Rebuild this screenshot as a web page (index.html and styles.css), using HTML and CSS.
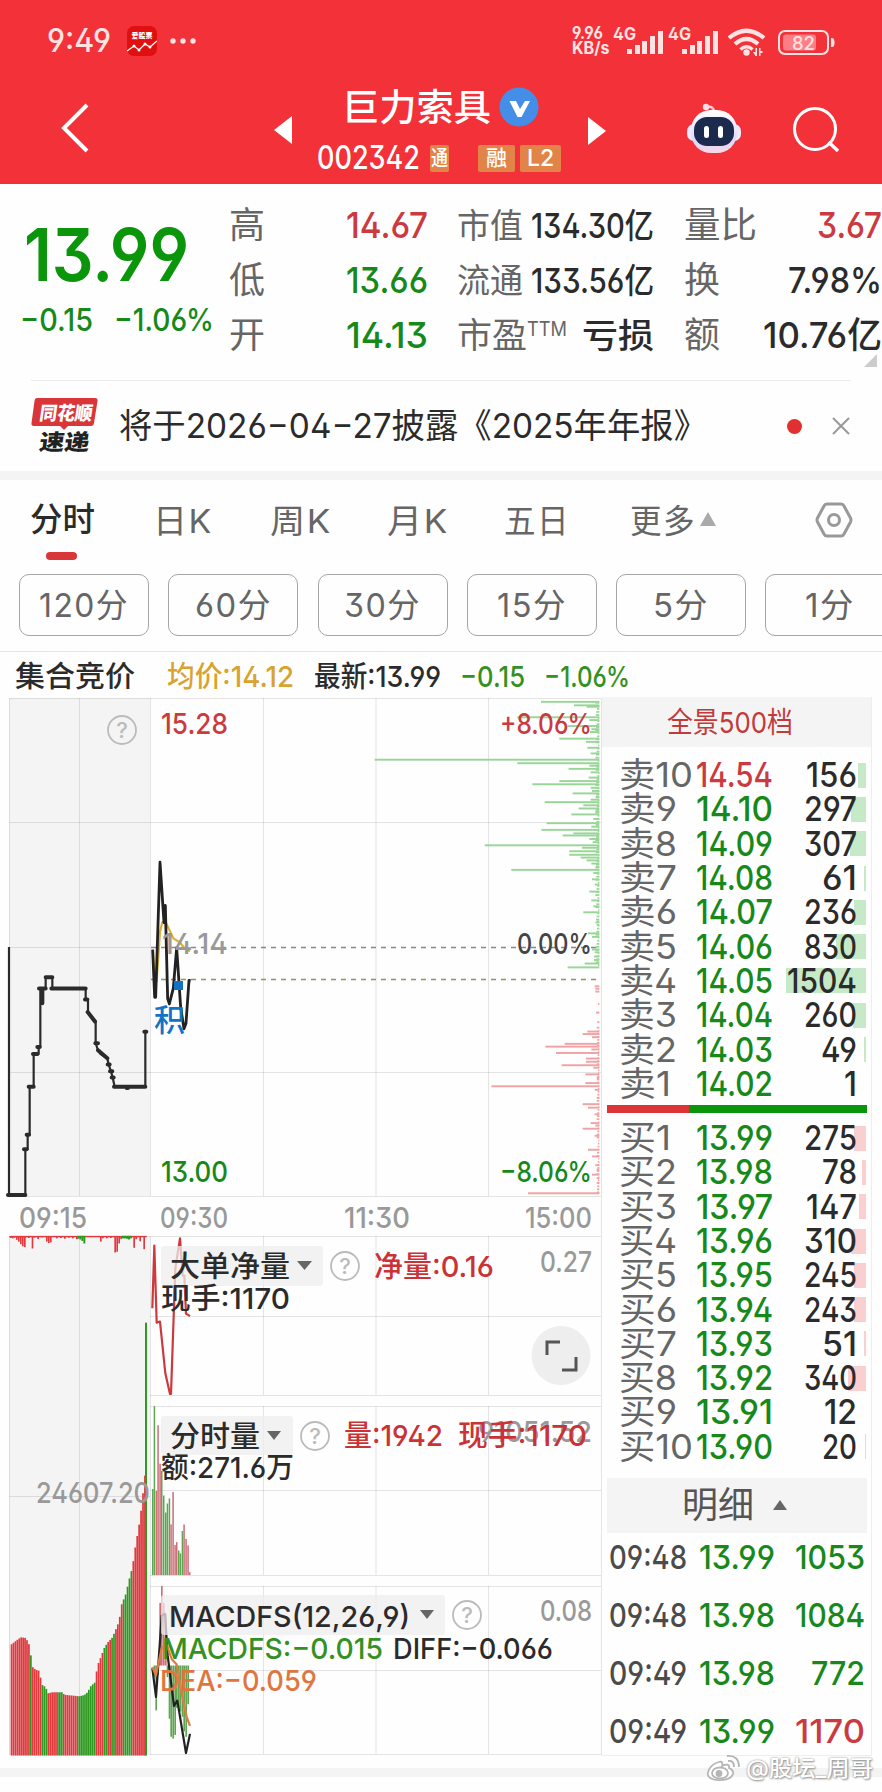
FILE: index.html
```html
<!DOCTYPE html>
<html lang="zh-CN">
<head>
    <meta charset="UTF-8">
    <meta name="viewport" content="width=device-width, initial-scale=1.0">
    <title>巨力索具 002342</title>
    <link rel="stylesheet" href="styles.css">
</head>
<body>

<header class="header">
    <div class="status-bar">
        <span class="clock" data-w="64">9:49</span>
        <svg class="app-icon" width="30" height="30" viewBox="0 0 30 30">
            <rect width="30" height="30" rx="7" fill="#e00f10"/>
            <text x="4.500" y="12" font-size="7" font-weight="900" fill="#fff" textLength="21">爱股票</text>
            <path d="M0 25 L7 20 L12 24 L18 18 L23 21 L30 15" fill="none" stroke="#fff" stroke-width="1.3"/>
            <circle cx="7" cy="20" r="1.500" fill="#fff"/><circle cx="12" cy="24" r="1.500" fill="#fff"/><circle cx="18" cy="18" r="1.500" fill="#fff"/><circle cx="23" cy="21" r="1.500" fill="#fff"/>
        </svg>
        <svg class="dots" width="28" height="6" fill="#ffe3e3"><circle cx="3" cy="3" r="2.700"/><circle cx="13" cy="3" r="2.700"/><circle cx="23" cy="3" r="2.700"/></svg>
        <div class="speed"><span data-w="36">9.96</span><span data-w="38">KB/s</span></div>
        <svg class="signals" width="264" height="32" viewBox="0 0 264 32" fill="#ffe3e3">
            <text x="1" y="15" font-size="17" font-weight="700" textLength="23" lengthAdjust="spacingAndGlyphs">4G</text>
            <path d="M15 24h5v5h-5zM23 20h5v9h-5zM30 16h5v13h-5zM38 11h5v18h-5zM46 6h5v23h-5z"/>
            <text x="56" y="15" font-size="17" font-weight="700" textLength="23" lengthAdjust="spacingAndGlyphs">4G</text>
            <path d="M70 24h5v5h-5zM78 20h5v9h-5zM85 16h5v13h-5zM93 11h5v18h-5zM101 6h5v23h-5z"/>
            <g fill="none" stroke="#ffe3e3" stroke-width="4.200">
                <path d="M117 13 Q134.500 -1.500 152 13"/>
                <path d="M123 19 Q134.500 9 146 19"/>
                <path d="M128.500 24.500 Q134.500 19 140.500 24.500" stroke-width="3.500"/>
            </g>
            <circle cx="134.500" cy="27.500" r="3.200"/>
            <path d="M141 27h2.500v-4h1.500v8h-1.500zM147 23h1.500v3h2v2h-2v3h-1.500z"/>
            <rect x="167" y="6" width="49" height="23" rx="6" fill="none" stroke="#ffe3e3" stroke-width="2"/>
            <rect x="171" y="9.500" width="33" height="16" rx="3" fill="#fb7f84"/>
            <path d="M219 13h1q2.500 0 2.500 4.500t-2.500 4.500h-1z"/>
            <text x="180" y="24.500" font-size="18" font-weight="500" textLength="23" lengthAdjust="spacingAndGlyphs">82</text>
        </svg>
    </div>
    <div class="nav">
        <svg class="back" width="30" height="52" viewBox="0 0 30 52"><path d="M27 3 L4 26 L27 49" fill="none" stroke="#fff" stroke-width="4"/></svg>
        <svg class="prev" width="18" height="28"><path d="M18 0 V28 L0 14z" fill="#fff"/></svg>
        <div class="stock">
            <div class="stock-name">
                <span data-w="149">巨力索具</span>
                <svg class="verified" width="40" height="40" viewBox="0 0 40 40"><circle cx="20" cy="20" r="19.500" fill="#448ee8"/><path d="M10.500 14 H17 L21 22 L26 14 H31 L22.500 30 H18.500z" fill="#fff"/></svg>
            </div>
            <div class="stock-code">
                <span class="code" data-w="103">002342</span>
                <i class="tag tag-clip"><b data-w="17">通</b></i>
                <i class="tag tag-rong">融</i>
                <i class="tag tag-l2">L2</i>
            </div>
        </div>
        <svg class="next" width="18" height="28"><path d="M0 0 V28 L18 14z" fill="#fff"/></svg>
        <svg class="robot" width="54" height="52" viewBox="0 0 54 52">
            <defs><linearGradient id="shell" x1="0" y1="0" x2="0" y2="1"><stop offset="0" stop-color="#fff"/><stop offset=".7" stop-color="#ded9fb"/><stop offset="1" stop-color="#f7d6e8"/></linearGradient></defs>
            <path d="M20 4 Q27 3 27 9" fill="none" stroke="#ffc9d2" stroke-width="2.500"/><circle cx="19" cy="4" r="3.200" fill="#ffe0e4"/>
            <rect x="0" y="21" width="54" height="17" rx="7" fill="#eceafc"/>
            <rect x="4" y="7" width="46" height="43" rx="20" fill="url(#shell)"/>
            <rect x="7" y="14" width="40" height="29" rx="13" fill="#1b2a4d"/>
            <rect x="17" y="23" width="5" height="12" rx="2.500" fill="#fff"/><rect x="31" y="23" width="5" height="12" rx="2.500" fill="#fff"/>
        </svg>
        <svg class="search" width="48" height="48" viewBox="0 0 48 48" fill="none" stroke="#fff" stroke-width="3"><circle cx="23" cy="23" r="20.500"/><path d="M36.500 36 L46 45" stroke-width="3.500"/></svg>
    </div>
</header>

<section class="quote">
    <div class="price-box">
        <div class="price"><span data-w="165">13.99</span></div>
        <div class="change"><span data-w="73">−0.15</span><span data-w="100">−1.06%</span></div>
    </div>
    <div class="facts facts-a">
        <div><em>高</em><span class="red" data-w="82">14.67</span></div>
        <div><em>低</em><span class="green" data-w="82">13.66</span></div>
        <div><em>开</em><span class="green" data-w="82">14.13</span></div>
    </div>
    <div class="facts facts-b">
        <div><em data-w="66">市值</em><span data-w="123">134.30亿</span></div>
        <div><em data-w="66">流通</em><span data-w="123">133.56亿</span></div>
        <div><em class="pe">市盈<sup data-w="40">TTM</sup></em><span data-w="72">亏损</span></div>
    </div>
    <div class="facts facts-c">
        <div><em data-w="73">量比</em><span class="red" data-w="65">3.67</span></div>
        <div><em>换</em><span data-w="94">7.98%</span></div>
        <div><em>额</em><span data-w="119">10.76亿</span></div>
        <svg class="corner" width="13" height="13"><path d="M13 0 V13 H0z" fill="#ccc"/></svg>
    </div>
</section>

<section class="notice">
    <svg class="notice-logo" width="68" height="58" viewBox="0 0 68 58">
        <path d="M6 1 H64 Q67 1 66.500 4 L63 26 Q62.500 29 60 29 H37 L33 33 L29 29 H3 Q0 29 .5 26 L3.500 4 Q4 1 6 1z" fill="#d9363a"/>
        <g font-weight="900">
            <text transform="skewX(-8)" x="11" y="23" font-size="19" fill="#fff" textLength="53" lengthAdjust="spacingAndGlyphs">同花顺</text>
            <text transform="skewX(-8)" x="15" y="53" font-size="22" fill="#222" textLength="50" lengthAdjust="spacingAndGlyphs">速递</text>
        </g>
    </svg>
    <span class="notice-text" data-w="588">将于2026−04−27披露《2025年年报》</span>
    <i class="red-dot"></i>
    <svg class="close" width="18" height="18" stroke="#999" stroke-width="2"><path d="M1 1 L17 17 M17 1 L1 17"/></svg>
</section>

<nav class="tabs">
    <span class="tab active"><b data-w="65">分时</b></span>
    <span class="tab"><b data-w="60">日K</b></span>
    <span class="tab"><b data-w="62">周K</b></span>
    <span class="tab"><b data-w="62">月K</b></span>
    <span class="tab"><b data-w="66">五日</b></span>
    <span class="tab"><b data-w="66">更多</b><svg class="more" width="16" height="14"><path d="M8 0 L16 14 H0z" fill="#aaa"/></svg></span>
    <svg class="gear" width="38" height="36" viewBox="0 0 38 36" fill="none" stroke="#999" stroke-width="3"><path d="M12 2 H26 Q28 2 29 4 L35.500 16 Q36.500 18 35.500 20 L29 32 Q28 34 26 34 H12 Q10 34 9 32 L2.500 20 Q1.500 18 2.500 16 L9 4 Q10 2 12 2z"/><circle cx="19" cy="18" r="5.500"/></svg>
</nav>

<div class="periods">
    <button><b data-w="90">120分</b></button>
    <button><b data-w="77">60分</b></button>
    <button><b data-w="77">30分</b></button>
    <button><b data-w="70">15分</b></button>
    <button><b data-w="56">5分</b></button>
    <button><b data-w="50">1分</b></button>
</div>

<div class="summary">
    <span class="auction" data-w="120">集合竞价</span>
    <span class="avg" data-w="127">均价:14.12</span>
    <span class="last" data-w="127">最新:13.99</span>
    <span class="down" data-w="65">−0.15</span>
    <span class="down" data-w="86">−1.06%</span>
</div>

<main class="main">
    <svg class="chart" width="602" height="1070" viewBox="0 690 602 1070">
        <g class="panels">
            <rect x="9" y="698" width="141" height="498"/>
            <rect x="9" y="1236" width="141" height="519"/>
        </g>
        <path class="grid" d="M9.500 698.500H601 M9.500 822.500H601 M9.500 947.500H150 M9.500 1072.500H601 M9.500 1196.500H601
            M9.500 698V1196 M79.500 698V1196 M150.500 698V1196 M263.500 698V1196 M376 698V1196 M488.500 698V1196 M601.500 698V1755
            M9.500 1236.500H601 M150 1316.500H601 M150 1395.500H601 M150 1406.500H601 M150 1490.500H601 M150 1575.500H601 M150 1586.500H601 M150 1670.500H601 M150 1754.500H601
            M9.500 1236V1755 M79.500 1236V1755 M150.500 1236V1755 M9.500 1496.500H150
            M263.500 1236V1395 M376 1236V1395 M488.500 1236V1395 M263.500 1406V1575 M376 1406V1575 M488.500 1406V1575 M263.500 1586V1754 M376 1586V1754 M488.500 1586V1754"/>

        <g id="depth" transform="translate(300 690) scale(.33333 .35077)"></g>
        <path d="M151 947.500H601" stroke="#888" stroke-width="1.300" stroke-dasharray="5 5"/>
        <path d="M151 979.500H601" stroke="#99905a" stroke-width="1.300" stroke-dasharray="5 5"/>

        <g class="line" transform="translate(0 690) scale(.33333 .35077)">
            <path stroke="#2b2b2b" d="M27 733 V1440 H76 V1309 H83 V1268 H89 V1131 H101 V1038 H116 V1018 H121 V851 H127 V893 V851 H137 V819 H157 V851 H257 V882 H264 V918 L287 945 V1007 L294 1027 L302 1038 L322 1050 L326 1068 L333 1087 L338 1105 L344 1131 H436 V974"/>
            <path class="thick" d="M24 1440 H76 M72 1309 H80 M80 1268 H87 M86 1131 H101 M99 1038 H112 M112 1018 H119 M117 851 H137 M127 851 V893 M137 819 H157 M154 851 H257 M255 882 H262 M263 918 L285 945 M286 1007 H294 M294 1027 L322 1050 M323 1068 H329 M330 1087 H337 M335 1105 H341 M342 1131 H436 M380 1135 H384 M433 974 H439"/>
            <path stroke="#e0af3a" d="M458 740 L463 800 L470 830 L480 690 L487 662 L497 662 L505 678 L520 708 L540 720 L555 738 L570 745"/>
            <path class="price-line" d="M458 740 L464 876 L467 876 L480 491 L492 663 L496 614 L503 880 L508 895 L520 850 L530 735 L542 905 L552 966 L558 950 L567 828 H572"/>
        </g>
        <rect x="174" y="981" width="9" height="9" fill="#1272c4"/>
        <text x="154" y="1031" font-size="31" font-weight="500" fill="#1272c4">积</text>

        <g class="axis">
            <text x="161" y="734" textLength="67" fill="#cb3a3e">15.28</text>
            <text x="500" y="734" textLength="92" fill="#cb3a3e">+8.06%</text>
            <text x="162" y="954" textLength="66" fill="#999">14.14</text>
            <text x="517" y="954" textLength="75" fill="#444">0.00%</text>
            <text x="161" y="1182" textLength="67" fill="#17891a">13.00</text>
            <text x="500" y="1182" textLength="92" fill="#17891a">−8.06%</text>
            <g fill="#999">
                <text x="19" y="1228" textLength="68">09:15</text>
                <text x="160" y="1228" textLength="68">09:30</text>
                <text x="344" y="1228" textLength="66">11:30</text>
                <text x="525" y="1228" textLength="67">15:00</text>
            </g>
        </g>
        <g class="help"><circle cx="122" cy="730" r="14"/><text x="122" y="738">?</text></g>

        <g id="sub" transform="translate(0 1225) scale(.33333 .36166)"></g>
        <g class="line" transform="translate(0 1225) scale(.33333 .36166)">
            <path stroke="#cc3a3e" d="M457 230 L463 57 L470 270 L480 267 L496 410 L510 467 H513 L526 120 L540 37 L548 140 L553 140 L558 245 L570 252"/>
            <path stroke="#222" d="M457 1225 L468 1305 L480 1150 L485 1080 L495 1075 L503 1190 L522 1330 L532 1315 L558 1460 L570 1407"/>
            <path stroke="#e07b44" d="M457 1222 L468 1245 L485 1170 L500 1160 L515 1200 L530 1215 L548 1310 L560 1360 L570 1385"/>
        </g>

        <g class="pick">
            <rect x="161" y="1246" width="162" height="40" rx="3"/><path d="M297 1261h15l-7.500 9z"/>
            <rect x="161" y="1416" width="132" height="39" rx="3"/><path d="M267 1431h14l-7 9z"/>
            <rect x="161" y="1595" width="284" height="40" rx="3"/><path d="M420 1610h14l-7 9z"/>
        </g>
        <g class="labels">
            <text x="170" y="1277" textLength="120">大单净量</text>
            <text x="161" y="1309" textLength="129">现手:1170</text>
            <text x="374" y="1277" textLength="120" fill="#cb3236">净量:0.16</text>
            <text x="170" y="1447" textLength="90">分时量</text>
            <text x="161" y="1478" textLength="133">额:271.6万</text>
            <text class="dim" x="478" y="1442" textLength="114">91051.52</text>
            <text x="344" y="1446" textLength="99" fill="#cb3236">量:1942</text>
            <text x="458" y="1446" textLength="129" fill="#cb3236">现手:1170</text>
            <text x="169" y="1627" textLength="241">MACDFS(12,26,9)</text>
            <text x="162" y="1659" textLength="221" fill="#35911f">MACDFS:−0.015</text>
            <text x="393" y="1659" textLength="160">DIFF:−0.066</text>
            <text x="160" y="1691" textLength="157" fill="#e0763f">DEA:−0.059</text>
            <text class="dim" x="540" y="1272" textLength="52">0.27</text>
            <text class="dim" x="36" y="1503" textLength="114">24607.20</text>
            <text class="dim" x="540" y="1621" textLength="52">0.08</text>
        </g>
        <g class="help"><circle cx="345" cy="1266" r="14"/><text x="345" y="1274">?</text></g>
        <g class="help"><circle cx="315" cy="1436" r="14"/><text x="315" y="1444">?</text></g>
        <g class="help"><circle cx="467" cy="1615" r="14"/><text x="467" y="1623">?</text></g>
        <circle cx="561" cy="1355.500" r="29.500" fill="#eee"/>
        <path d="M547 1355V1342H560 M562 1370H576V1357" fill="none" stroke="#555" stroke-width="3"/>
    </svg>

    <aside class="book">
        <div class="book-title"><span data-w="126">全景500档</span></div>
        <div class="orders sell" id="sell"></div>
        <div class="ratio"><i></i></div>
        <div class="orders buy" id="buy"></div>
        <div class="detail-title"><span data-w="72">明细</span><svg width="14" height="10"><path d="M7 0 L14 10 H0z" fill="#666"/></svg></div>
        <div class="details" id="details"></div>
    </aside>
</main>

<footer class="footer">
    <div class="watermark">
        <svg width="34" height="28" viewBox="0 0 34 28" fill="none" stroke="#b5b5b5" stroke-width="1.800"><path d="M13 8 C5 10 1 17 2 21 C4 28 24 28 27 20 C28 16 25 15 23 14 C24 10 20 10 16 12 C17 9 16 7 13 8z" fill="#fff"/><ellipse cx="14" cy="19" rx="8" ry="5.500"/><circle cx="13" cy="19.500" r="2.500" fill="#b5b5b5"/><path d="M22 7 Q28 6 28 13 M21 2 Q33 1 33 13"/></svg>
        <span data-w="127">@股坛_周哥</span>
    </div>
</footer>

<script src="script.js"></script>
</body>
</html>
```
FILE: styles.css
```css
* { box-sizing: border-box; }
body { margin: 0; width: 882px; height: 1792px; overflow: hidden; background: #fefefe; color: #2b2b2b; font-family: Inter, "Noto Sans CJK SC", sans-serif; font-feature-settings: "ss01" 1; font-weight: 500; }
i, em { font-style: normal; }
b { font-weight: inherit; }
svg { display: block; flex: none; }
[data-w] { display: inline-block; white-space: nowrap; transform-origin: 0 50%; flex: none; }
.red { color: #cb3a3e; }
.green { color: #17891a; }

/* header */
.header { height: 184px; background: #f23238; border-bottom: 1px solid #b8484b; color: #fff; }
.status-bar { display: flex; align-items: center; height: 82px; padding-left: 47px; color: #ffe3e3; }
.clock { font-size: 32px; line-height: 40px; }
.app-icon { margin-left: 16px; }
.dots { margin-left: 13px; }
.speed { display: flex; flex-direction: column; width: 40px; margin-left: 374px; font-size: 17px; font-weight: 700; line-height: 15px; }
.signals { margin-bottom: 1px; }
.nav { display: flex; align-items: flex-start; height: 101px; }
.back { margin: 20px 0 0 60px; }
.prev { margin: 34px 0 0 184px; }
.stock { width: 270px; margin-left: 25px; }
.stock-name { display: flex; align-items: center; height: 49px; padding: 2px 0 0 25px; font-size: 37px; line-height: 48px; }
.verified { margin: -2px 0 0 8px; }
.stock-code { display: flex; align-items: center; height: 54px; font-size: 32px; line-height: 40px; }
.tag { height: 27px; border-radius: 2px; background: #e28448; font-size: 21px; font-weight: 500; line-height: 26px; text-align: center; }
.tag-clip { width: 19px; margin-left: 10px; padding-left: 1px; text-align: left; }
.tag-rong { width: 37px; margin-left: 29px; }
.tag-l2 { width: 41px; margin-left: 5px; font-size: 23px; }
.next { margin: 35px 0 0 1px; }
.robot { margin: 21px 0 0 81px; }
.search { margin: 24px 0 0 51px; }

/* quote */
.quote { display: flex; height: 196px; padding-top: 14px; }
.price-box { width: 229px; color: #17891a; }
.price { height: 100px; padding: 22px 0 0 24px; color: #0a950a; font-size: 73px; font-weight: 600; line-height: 70px; }
.change { display: flex; gap: 21px; padding-left: 20px; font-size: 31px; line-height: 44px; }
.facts > div { display: flex; align-items: center; justify-content: space-between; height: 55px; font-size: 36px; line-height: 55px; }
.facts em { color: #666; font-weight: 400; }
.facts-a { width: 199px; }
.facts-b { width: 197px; margin-left: 29px; }
.facts-b > div { font-size: 34px; }
.facts-c { width: 198px; margin-left: 30px; }
.pe { display: flex; font-size: 35px; }
.pe sup { font-size: 20px; line-height: 43px; vertical-align: top; }
.corner { margin: -9px 0 0 180px; }

/* notice */
.notice { display: flex; align-items: center; height: 91px; margin: 0 31px; border-top: 1px solid #eaeaea; }
.notice-logo { margin-right: 20px; }
.notice-text { font-size: 34px; font-weight: 400; line-height: 50px; }
.red-dot { width: 15px; height: 15px; margin-left: 80px; border-radius: 50%; background: #e03030; }
.close { margin-left: 30px; }

/* tabs */
.tabs { display: flex; height: 103px; border-top: 9px solid #f4f4f4; padding-left: 30px; color: #666; font-size: 33px; font-weight: 400; }
.tab { display: flex; align-items: center; height: 77px; margin-right: 55px; letter-spacing: 1.500px; }
.tab:nth-child(1) { margin-right: 58px; letter-spacing: 0; }
.tab:nth-child(2) { margin-right: 57px; }
.tab:nth-child(5) { margin-right: 60px; }
.active { flex-direction: column; align-items: flex-start; height: 80px; color: #2b2b2b; font-weight: 500; line-height: 72px; }
.active b { height: 72px; padding-top: 3px; }
.active::after { content: ""; width: 31px; height: 8px; margin-left: 16px; border-radius: 4px; background: #d9363a; }
.more { margin-left: 4px; }
.gear { margin: 22px 0 0 44px; }
.periods { display: flex; gap: 19.300px; height: 78px; padding-left: 19px; border-bottom: 1px solid #e6e6e6; overflow: hidden; }
.periods button { flex: none; width: 130px; height: 62px; padding: 0; background: none; border: 1px solid #a5a5a5; border-radius: 10px; color: #666; font: inherit; font-size: 33px; font-weight: 400; letter-spacing: 1.500px; line-height: 58px; }
.summary { display: flex; align-items: center; height: 26px; margin-top: 12px; padding-left: 15px; font-size: 29px; line-height: 26px; }
.avg { margin-left: 32px; color: #d8a32e; }
.last { margin-left: 20px; }
.down { margin-left: 19px; color: #35911f; }

/* charts */
.main { display: flex; align-items: flex-start; height: 1070px; }
.panels { fill: #f4f4f4; }
.grid { fill: none; stroke: #000; stroke-opacity: .1; }
.line path { fill: none; stroke-width: 2.200; stroke-linejoin: round; vector-effect: non-scaling-stroke; }
.line .thick { stroke: #2b2b2b; stroke-width: 4; stroke-linecap: round; }
.line .price-line { stroke: #222; stroke-width: 2.800; }
.axis, .labels { font-size: 29px; }
.labels { fill: #2b2b2b; }
.labels .dim { fill: #999; }
.pick rect { fill: #eee; fill-opacity: .75; }
.pick path { fill: #666; }
.help circle { fill: none; stroke: #bbb; stroke-width: 1.800; }
.help text { fill: #bbb; font-size: 22px; text-anchor: middle; }
.up { fill: #e0393e; }
.dn { fill: #2f9a22; }
.soft .up { fill: #cc6f76; }
.soft .dn { fill: #5fa552; }
.ask { fill: #98d698; }
.bid { fill: #efa3a5; }

/* order book */
.book { width: 270px; height: 1059px; border-right: 1px solid #eee; border-bottom: 1px solid #eee; margin-top: 7px; }
.book-title { width: 269px; height: 50px; padding: 1px 0 0 65px; background: #f4f4f4; color: #c23b3b; font-size: 29px; font-weight: 400; line-height: 50px; }
.orders { padding: 11px 5px 0 17px; }
.order { display: grid; grid-template-columns: 77px 1fr 80px; align-items: center; height: 34.300px; font-size: 34px; line-height: 34px; }
.order em { justify-self: start; color: #666; font-weight: 400; }
.order .vol { position: relative; display: flex; justify-content: flex-end; align-items: center; height: 34px; padding-right: 9px; }
.order .vol i { position: absolute; right: 0; height: 25px; background: #c6eac8; }
.buy .vol i { background: #f9cfd0; }
.ratio { width: 260px; height: 8px; margin: 4px 0 0 5px; background: #0a950a; }
.ratio i { display: block; width: 82px; height: 8px; background: #dd3438; }
.buy { padding-top: 8px; }
.detail-title { display: flex; align-items: center; gap: 19px; width: 260px; height: 55px; margin: 14px 0 0 5px; padding-left: 75px; background: #f4f4f4; color: #555; font-size: 36px; font-weight: 400; line-height: 55px; }
.details { margin-top: -5px; padding: 0 6px 0 7px; }
.deal { display: flex; align-items: center; height: 58px; font-size: 33px; line-height: 58px; }
.deal time { color: #4b4b4b; margin-right: 12px; }
.deal .deal-vol { margin-left: auto; }

/* footer */
.footer { height: 32px; position: relative; padding-top: 8px; }
.footer::before { content: ""; display: block; height: 9px; background: #f4f4f4; }
.watermark { position: absolute; left: 706px; top: -9px; display: flex; align-items: center; gap: 6px; color: #fff; font-size: 22px; line-height: 34px; text-shadow: 0 0 2px #888, 1px 1px 2px #999; }
```
FILE: script.js
```js
// squeeze text to the width of its column
function fit(el) {
    const w = Number(el.dataset.w);
    const natural = el.getBoundingClientRect().width;
    el.style.transform = `scaleX(${w / natural})`;
    el.style.marginRight = `${parseFloat(getComputedStyle(el).marginRight) + w - natural}px`;
}

// order book: level, price, volume, volume text width, bar width
const sells = [
    [10, "14.54", 156, 51, 8], [9, "14.10", 297, 53, 15], [8, "14.09", 307, 53, 16], [7, "14.08", 61, 35, 2], [6, "14.07", 236, 53, 12],
    [5, "14.06", 830, 53, 30], [4, "14.05", 1504, 70, 80], [3, "14.04", 260, 53, 13], [2, "14.03", 49, 36, 2], [1, "14.02", 1, 13, 0]
];
const buys = [
    [1, "13.99", 275, 53, 12], [2, "13.98", 78, 35, 4], [3, "13.97", 147, 51, 7], [4, "13.96", 310, 53, 15], [5, "13.95", 245, 53, 12],
    [6, "13.94", 243, 53, 12], [7, "13.93", 51, 35, 2], [8, "13.92", 340, 53, 18], [9, "13.91", 12, 33, 0], [10, "13.90", 20, 35, 1]
];
const deals = [
    ["09:48", "13.99", "1053", "green", 70], ["09:48", "13.98", "1084", "green", 70],
    ["09:49", "13.98", "772", "green", 54], ["09:49", "13.99", "1170", "red", 70]
];

function orderRows(id, side, rows) {
    document.getElementById(id).innerHTML = rows.map(([n, price, vol, w, bar]) => `
        <div class="order">
            <em data-w="${n === 10 ? 74 : n === 1 ? 52 : 58}">${side}${n}</em>
            <span class="${price > "14.14" ? "red" : "green"}"><b data-w="77">${price}</b></span>
            <span class="vol"><i style="width:${bar}px"></i><b data-w="${w}">${vol}</b></span>
        </div>`).join("");
}
orderRows("sell", "卖", sells);
orderRows("buy", "买", buys);

document.getElementById("details").innerHTML = deals.map(([t, p, v, c, w]) => `
    <div class="deal"><time data-w="78">${t}</time><span class="green" data-w="76">${p}</span><span class="deal-vol ${c}" data-w="${w}">${v}</span></div>`).join("");

const rect = (x, y, w, h, cls) => `<rect class="${cls}" x="${x}" y="${y}" width="${w}" height="${h}"/>`;

// pending orders along the right edge: y, left end
const asks = [[34,723],[44,822],[48,860],[78,652],[86,868],[103,802],[112,874],[120,870],[139,778],[148,858],[165,862],[181,872],[199,224],[209,652],[216,868],[225,806],[235,872],[250,866],[260,778],[269,697],[279,872],[288,876],[295,818],[304,888],[313,872],[320,734],[329,850],[338,836],[346,886],[355,814],[368,880],[380,740],[390,874],[399,724],[409,820],[415,788],[425,868],[434,878],[443,554],[450,846],[460,808],[470,808],[478,842],[486,860],[495,874],[504,888],[513,634],[522,880],[540,876],[555,884],[575,868],[600,874],[617,880],[634,850],[660,890],[670,890],[694,864],[704,876],[740,876],[748,884],[760,882],[770,882],[780,854],[791,803]];
const bids = [[845,884],[852,886],[860,886],[895,894],[920,888],[947,892],[974,862],[981,848],[990,876],[1009,794],[1017,736],[1025,874],[1035,768],[1051,858],[1060,858],[1070,785],[1077,880],[1096,856],[1106,890],[1121,856],[1130,574],[1140,884],[1163,890],[1181,848],[1191,864],[1210,884],[1235,872],[1242,886],[1251,848],[1271,884],[1311,864],[1330,876],[1355,886],[1368,890],[1382,876],[1392,890],[1405,890],[1435,684]];
let depth = "";
for (let y = 34, k = 0; y < 790; y += 8.700, k++) depth += rect(886 + k * 7 % 9, y, 12 - k * 7 % 9, 5, "ask");
for (let y = 960, k = 0; y < 1430; y += 8.700, k++) depth += rect(890 + k * 5 % 6, y, 8 - k * 5 % 6, 5, "bid");
asks.forEach(([y, x]) => depth += rect(x, y - 3, 898 - x, 5.500, "ask"));
bids.forEach(([y, x]) => depth += rect(x, y - 3, 898 - x, 5.500, "bid"));
document.getElementById("depth").innerHTML = depth;

// auction volume outline, then the colour changes along it
const outline = [[31,1160],[45,1150],[60,1140],[75,1142],[84,1158],[90,1190],[95,1222],[105,1230],[117,1233],[121,1270],[135,1278],[140,1295],[155,1292],[185,1292],[190,1299],[235,1303],[250,1300],[260,1292],[270,1275],[282,1265],[290,1218],[300,1195],[310,1170],[320,1155],[335,1140],[345,1118],[355,1095],[362,1050],[375,1020],[385,980],[395,945],[405,880],[413,840],[420,795],[426,745],[434,678]];
const runs = [[88,"up"],[94,"dn"],[119,"up"],[138,"dn"],[166,"up"],[186,"dn"],[230,"up"],[286,"dn"],[306,"up"],[318,"dn"],[332,"up"],[342,"dn"],[364,"up"],[397,"dn"],[436,"up"]];
let sub = "";
for (let x = 32; x < 434; x += 5.800) {
    const i = outline.findIndex(p => p[0] > x);
    const [a, b] = [outline[i - 1], outline[i]];
    const y = a[1] + (b[1] - a[1]) * (x - a[0]) / (b[0] - a[0]);
    sub += rect(x, y, 5.200, 1467 - y, runs.find(r => r[0] > x)[1]);
}
sub += rect(435, 270, 6, 1197, "dn");

// net order bars hanging from the top
[[30,5],[36,6],[42,4],[48,10],[54,15],[60,22],[66,28],[72,30],[84,5],[95,34],[101,4],[112,8],[124,3],[138,15],[144,19],[150,17],[168,6],[180,5],[192,7],[204,4],[216,6],[228,8],[300,15],[306,6],[318,6],[330,5],[343,45],[349,43],[355,20],[361,8],[400,32],[406,8],[418,14],[430,36]].forEach(([x, h]) => sub += rect(x, 31, 5, h, "up"));
sub += rect(28, 30, 412, 4, "up");
[[232,8],[238,10],[244,14],[250,21],[366,7],[372,7],[378,8],[384,10],[390,7]].forEach(([x, h]) => sub += rect(x, 30, 6, h, "dn"));

// minute volume and MACD bars: x, y, colour
sub += '<g class="soft">';
[[458,730,0],[463,501,0],[469,735,1],[474,554,1],[480,660,1],[485,680,0],[491,748,0],[497,795,0],[502,770,0],[508,756,0],[513,828,1],[519,738,1],[525,885,1],[530,877,1],[536,900,0],[541,908,0],[547,846,0],[552,828,1],[558,868,1],[564,886,1],[569,960,1]].forEach(([x, y, up]) => sub += rect(x - 2, y, 4.500, 968 - y, up ? "up" : "dn"));
[[480,1045],[485,998],[491,1045],[497,1075]].forEach(([x, y]) => sub += rect(x - 2, y, 5, 1218 - y, "up"));
[[463,1250],[468,1342],[474,1245],[502,1250],[508,1365],[513,1415],[519,1420],[525,1410],[530,1335],[536,1340],[541,1345],[547,1360],[552,1400],[558,1415],[564,1325]].forEach(([x, y]) => sub += rect(x - 2, 1218, 5, y - 1218, "dn"));
sub += "</g>";
document.getElementById("sub").innerHTML = sub;

document.querySelectorAll(".axis text, .labels text").forEach(t => t.setAttribute("lengthAdjust", "spacingAndGlyphs"));
document.querySelectorAll("[data-w]").forEach(fit);
```
